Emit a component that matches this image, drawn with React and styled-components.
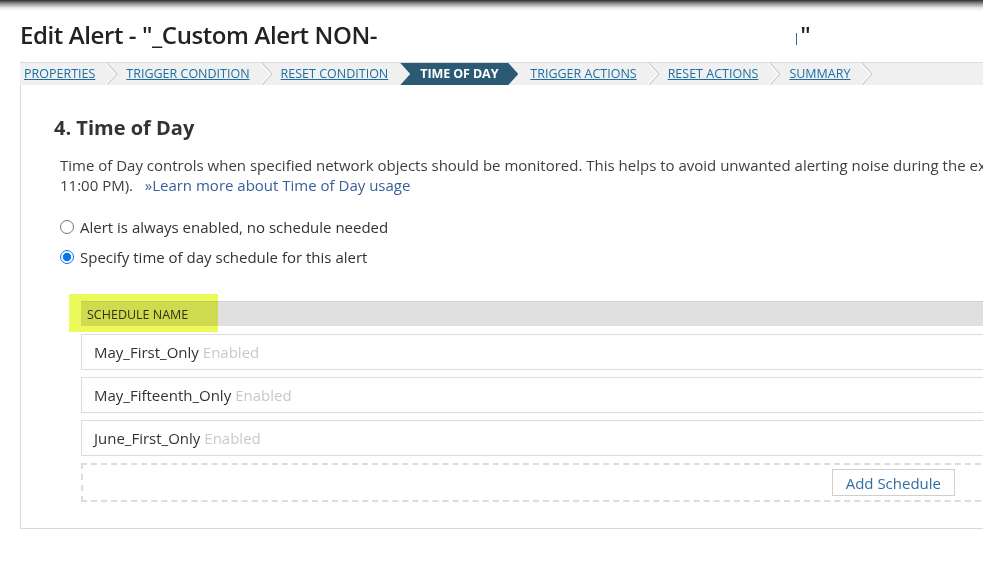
import React from 'react'
import styled, { createGlobalStyle } from 'styled-components'

const GlobalStyle = createGlobalStyle`
  body {
    margin: 0;
    overflow: hidden;
    background: #fff;
    font-family: "Open Sans", "Liberation Sans", sans-serif;
    color: #333;
  }
`;

const steps = [
  'Properties',
  'Trigger Condition',
  'Reset Condition',
  'Time of Day',
  'Trigger Actions',
  'Reset Actions',
  'Summary',
];
const ACTIVE = 3;

const schedules = ['May_First_Only', 'May_Fifteenth_Only', 'June_First_Only'];

const Chevron = () => (
  <ChevronSvg width="12" height="22" viewBox="0 0 12 22">
    <polyline points="1,0 11,11 1,22" fill="none" stroke="#fff" strokeWidth="1.5" transform="translate(-1.5,0)" />
    <polyline points="1,0 11,11 1,22" fill="none" stroke="#cfcfcf" strokeWidth="1.2" />
  </ChevronSvg>
);

const App = () => {
  return (
    <>
      <GlobalStyle />
      <Page>
        <TopShade />
        <TitleRow>
          <Title>Edit Alert - "_Custom Alert NON-</Title>
          <Redacted />
          <Caret />
          <Title>"</Title>
        </TitleRow>

        <Crumbs>
          {steps.map((s, i) => {
            if (i === ACTIVE) return <ActiveCrumb key={s}>{s}</ActiveCrumb>;
            return (
              <React.Fragment key={s}>
                <CrumbLink href="#" $first={i === 0}>{s}</CrumbLink>
                {i + 1 !== ACTIVE && <Chevron />}
              </React.Fragment>
            );
          })}
        </Crumbs>

        <Panel>
          <Heading>4. Time of Day</Heading>
          <Description>
            <Line>
              Time of Day controls when specified network objects should be monitored. This helps to avoid unwanted alerting noise during the expected maintenance window (e.g. 10:00 PM to
            </Line>
            <Line>
              11:00 PM).&nbsp;&nbsp; <LearnMore href="#">»Learn more about Time of Day usage</LearnMore>
            </Line>
          </Description>

          <Options>
            <Option>
              <Radio type="radio" name="tod" />
              Alert is always enabled, no schedule needed
            </Option>
            <Option>
              <Radio type="radio" name="tod" defaultChecked />
              Specify time of day schedule for this alert
            </Option>
          </Options>

          <Schedules>
            <TableHead>
              <HeadLabel>Schedule Name</HeadLabel>
              <Highlight />
            </TableHead>
            {schedules.map((name) => (
              <ScheduleRow key={name}>
                {name} <Status>Enabled</Status>
              </ScheduleRow>
            ))}
            <AddBox>
              <AddButton>Add Schedule</AddButton>
            </AddBox>
          </Schedules>
        </Panel>
      </Page>
    </>
  );
}

export default App


const Page = styled.div`
  width: 1060px;
`;

const TopShade = styled.div`
  height: 11px;
  background: linear-gradient(to bottom, #2e2e2e 0%, #8a8a8a 30%, #e6e6e6 70%, #fff 100%);
`;

const TitleRow = styled.div`
  display: flex;
  align-items: center;
  height: 51px;
  padding-left: 20px;
`;

const Title = styled.h1`
  margin: 0 0 5px;
  font-size: 24px;
  font-weight: 600;
  letter-spacing: -0.4px;
  color: #222;
  white-space: nowrap;
`;

const Redacted = styled.div`
  width: 419px;
`;

const Caret = styled.div`
  width: 1px;
  height: 12px;
  margin: 5px 3px 0 0;
  background: #2a6ab0;
`;

const Crumbs = styled.nav`
  display: flex;
  align-items: center;
  height: 22px;
  margin-left: 20px;
  background: #f0f0f0;
  border-top: 1px solid #dcdcdc;
`;

const CrumbLink = styled.a`
  margin-left: ${(p) => (p.$first ? '4px' : '0')};
  margin-bottom: 2px;
  font-size: 12.5px;
  text-transform: uppercase;
  color: #1b6fa3;
  text-decoration: underline;
  white-space: nowrap;
`;

const ChevronSvg = styled.svg`
  display: block;
  flex: none;
  margin: 0 8px 0 11px;
`;

const ActiveCrumb = styled.span`
  display: flex;
  align-items: center;
  height: 22px;
  margin: 0 12px;
  padding: 0 20px 2px 20px;
  box-sizing: border-box;
  background: #2c5a75;
  color: #fff;
  font-size: 12.5px;
  font-weight: 700;
  text-transform: uppercase;
  white-space: nowrap;
  letter-spacing: -0.1px;
  clip-path: polygon(0 0, calc(100% - 10px) 0, 100% 50%, calc(100% - 10px) 100%, 0 100%, 10px 50%);
`;

const Panel = styled.section`
  margin-left: 20px;
  padding: 28px 0 26px 33px;
  border: 1px solid #d8d8d8;
  border-top: none;
`;

const Heading = styled.h2`
  margin: 0 0 12px;
  font-size: 20px;
  font-weight: 700;
  color: #333;
  line-height: 30px;
`;

const Description = styled.div`
  margin-left: 6px;
  font-size: 15px;
  line-height: 20px;
  color: #404040;
`;

const Line = styled.div`
  white-space: nowrap;
`;

const LearnMore = styled.a`
  color: #38609a;
  text-decoration: none;
`;

const Options = styled.div`
  display: flex;
  flex-direction: column;
  gap: 8px;
  margin: 21px 0 0 6px;
`;

const Option = styled.label`
  display: flex;
  align-items: center;
  height: 22px;
  font-size: 15px;
  color: #333;
`;

const Radio = styled.input`
  width: 14px;
  height: 14px;
  margin: 0 6px 0 0;
  accent-color: #0a75e8;
`;

const Schedules = styled.div`
  display: flex;
  flex-direction: column;
  gap: 7px;
  margin: 33px 0 0 27px;
  width: 940px;
`;

const TableHead = styled.div`
  position: relative;
  display: flex;
  align-items: center;
  height: 24px;
  background: #e0e0e0;
  border-top: 1px solid #d2d2d2;
  margin-bottom: 1px;
`;

const HeadLabel = styled.span`
  padding-left: 6px;
  font-size: 12.5px;
  text-transform: uppercase;
  color: #333;
`;

const Highlight = styled.div`
  position: absolute;
  left: -12px;
  top: -8px;
  width: 149px;
  height: 38px;
  background: #ecf95a;
  mix-blend-mode: multiply;
`;

const ScheduleRow = styled.div`
  display: flex;
  align-items: center;
  gap: 4px;
  height: 34px;
  padding-left: 12px;
  border: 1px solid #dcdcdc;
  font-size: 15px;
  color: #333;
`;

const Status = styled.span`
  color: #c9c9c9;
`;

const AddBox = styled.div`
  display: flex;
  align-items: center;
  justify-content: flex-end;
  height: 35px;
  padding-right: 64px;
  border: 2px dashed #dcdcdc;
`;

const AddButton = styled.button`
  height: 27px;
  padding: 0 13px;
  background: #fff;
  border: 1px solid #cfcfcf;
  font-family: "Open Sans", "Liberation Sans", sans-serif;
  font-size: 15px;
  color: #2f6ea5;
`;
